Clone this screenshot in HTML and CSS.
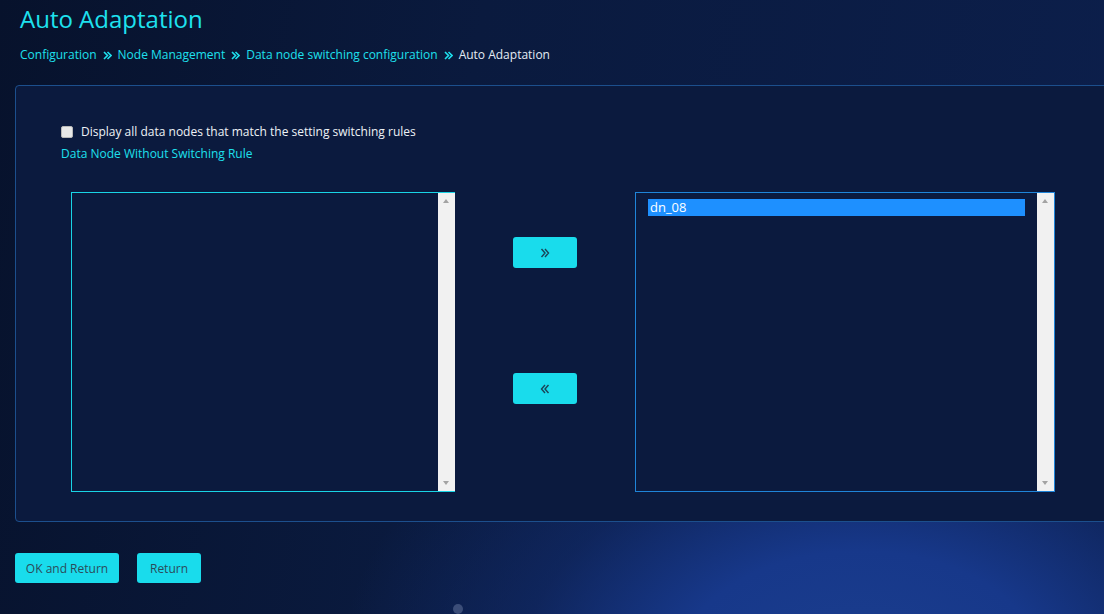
FILE: index.html
```html
<!DOCTYPE html>
<html>
<head>
<meta charset="utf-8">
<link rel="stylesheet" href="styles.css">
</head>
<body>
<div class="page">
  <header class="head">
    <h1 class="title">Auto Adaptation</h1>
    <nav class="crumbs">
      <a class="crumb">Configuration</a>
      <svg class="sep" width="9" height="9" viewBox="0 0 9 9"><path d="M1 1l3.5 3.5L1 8M4.5 1L8 4.5 4.5 8" fill="none" stroke="#1ee0ee" stroke-width="1.6"/></svg>
      <a class="crumb">Node Management</a>
      <svg class="sep" width="9" height="9" viewBox="0 0 9 9"><path d="M1 1l3.5 3.5L1 8M4.5 1L8 4.5 4.5 8" fill="none" stroke="#1ee0ee" stroke-width="1.6"/></svg>
      <a class="crumb">Data node switching configuration</a>
      <svg class="sep" width="9" height="9" viewBox="0 0 9 9"><path d="M1 1l3.5 3.5L1 8M4.5 1L8 4.5 4.5 8" fill="none" stroke="#1ee0ee" stroke-width="1.6"/></svg>
      <span class="crumb current">Auto Adaptation</span>
    </nav>
  </header>

  <section class="panel">
    <label class="check-row">
      <span class="checkbox"></span>
      <span class="check-label">Display all data nodes that match the setting switching rules</span>
    </label>
    <div class="sub-label">Data Node Without Switching Rule</div>

    <div class="transfer">
      <div class="list list-left">
        <div class="list-body"></div>
        <div class="scroll">
          <span class="arrow up"></span>
          <span class="arrow down"></span>
        </div>
      </div>
      <div class="moves">
        <button class="move move-right">
          <svg width="12" height="12" viewBox="0 0 12 12"><path d="M2.5 2L6 6 2.5 10M6 2L9.5 6 6 10" fill="none" stroke="#1b4356" stroke-width="1.4"/></svg>
        </button>
        <button class="move move-left">
          <svg width="12" height="12" viewBox="0 0 12 12"><path d="M9.5 2L6 6l3.5 4M6 2L2.5 6 6 10" fill="none" stroke="#1b4356" stroke-width="1.4"/></svg>
        </button>
      </div>
      <div class="list list-right">
        <div class="list-body">
          <div class="item selected">dn_08</div>
        </div>
        <div class="scroll">
          <span class="arrow up"></span>
          <span class="arrow down"></span>
        </div>
      </div>
    </div>
  </section>

  <div class="actions">
    <button class="btn btn-ok">OK and Return</button>
    <button class="btn btn-return">Return</button>
  </div>
  <span class="dot"></span>
</div>
</body>
</html>
```

FILE: styles.css
```css
html, body {
  margin: 0;
  padding: 0;
}
body {
  width: 1104px;
  height: 614px;
  overflow: hidden;
  font-family: "Open Sans", "Noto Sans", sans-serif;
  background:
    radial-gradient(ellipse 520px 340px at 860px 670px, #1b3e8e 0%, #17388a 35%, rgba(18,44,110,0.6) 65%, rgba(10,26,62,0) 100%),
    linear-gradient(100deg, #07122c 0%, #0a1a3e 40%, #0c1f4c 100%);
}
.page {
  position: relative;
  height: 614px;
}
.head {
  padding: 3px 20px 0;
}
.title {
  margin: 0;
  font-size: 24px;
  line-height: 32px;
  font-weight: 400;
  color: #1ee2ef;
}
.crumbs {
  margin-top: 11px;
  display: flex;
  align-items: center;
  font-size: 12px;
  line-height: 18px;
  height: 18px;
}
.crumb {
  color: #1ee0ee;
}
.crumb.current {
  color: #e4ecf4;
}
.sep {
  margin: 0 6px 0 6px;
}
.panel {
  margin: 21px -10px 0 15px;
  height: 435px;
  border: 1px solid #1c4f8d;
  border-radius: 4px;
  background: #0b1a3e;
  padding: 0 0 0 45px;
  box-sizing: content-box;
}
.check-row {
  display: flex;
  align-items: center;
  margin-top: 40px;
  height: 12px;
}
.checkbox {
  width: 10px;
  height: 10px;
  border: 1px solid #b8b8b8;
  border-radius: 2px;
  background: #e8e8e8;
  margin-right: 8px;
}
.check-label {
  font-size: 12px;
  line-height: 18px;
  color: #eef2f6;
}
.sub-label {
  margin-top: 7px;
  font-size: 12px;
  line-height: 18px;
  color: #1ee0ee;
}
.transfer {
  display: flex;
  align-items: flex-start;
  margin-top: 29px;
  margin-left: 10px;
  gap: 58px;
}
.list {
  display: flex;
  height: 298px;
  background: #0b1a3e;
}
.list-left {
  width: 383px;
  border: 1px solid #19d4e6;
  border-right: 0;
}
.list-right {
  width: 418px;
  border: 1px solid #1f84d8;
}
.list-body {
  flex: 1;
  padding: 6px 12px;
}
.scroll {
  position: relative;
  width: 17px;
  background: #f1f1f1;
}
.arrow {
  position: absolute;
  left: 5px;
  width: 0;
  height: 0;
  border-left: 3.5px solid transparent;
  border-right: 3.5px solid transparent;
}
.arrow.up {
  top: 6px;
  border-bottom: 4px solid #a3a3a3;
}
.arrow.down {
  bottom: 6px;
  border-top: 4px solid #a3a3a3;
}
.item {
  font-size: 13px;
  line-height: 17px;
  color: #fff;
  padding-left: 2px;
}
.item.selected {
  background: #1e90ff;
}
.moves {
  display: flex;
  flex-direction: column;
  gap: 105px;
  padding-top: 45px;
}
.move {
  width: 64px;
  height: 31px;
  border: 0;
  border-radius: 3px;
  background: #19dcec;
  display: flex;
  align-items: center;
  justify-content: center;
  padding: 0;
}
.actions {
  display: flex;
  gap: 18px;
  margin: 31px 0 0 15px;
}
.btn {
  height: 30px;
  border: 0;
  border-radius: 3px;
  background: #19dcec;
  font-family: "Open Sans", "Noto Sans", sans-serif;
  font-size: 12px;
  color: #2b4b5a;
  padding: 0;
}
.btn-ok {
  width: 104px;
}
.btn-return {
  width: 64px;
}
.dot {
  position: absolute;
  left: 453px;
  top: 604px;
  width: 10px;
  height: 10px;
  border-radius: 50%;
  background: #3b4d78;
}
```
